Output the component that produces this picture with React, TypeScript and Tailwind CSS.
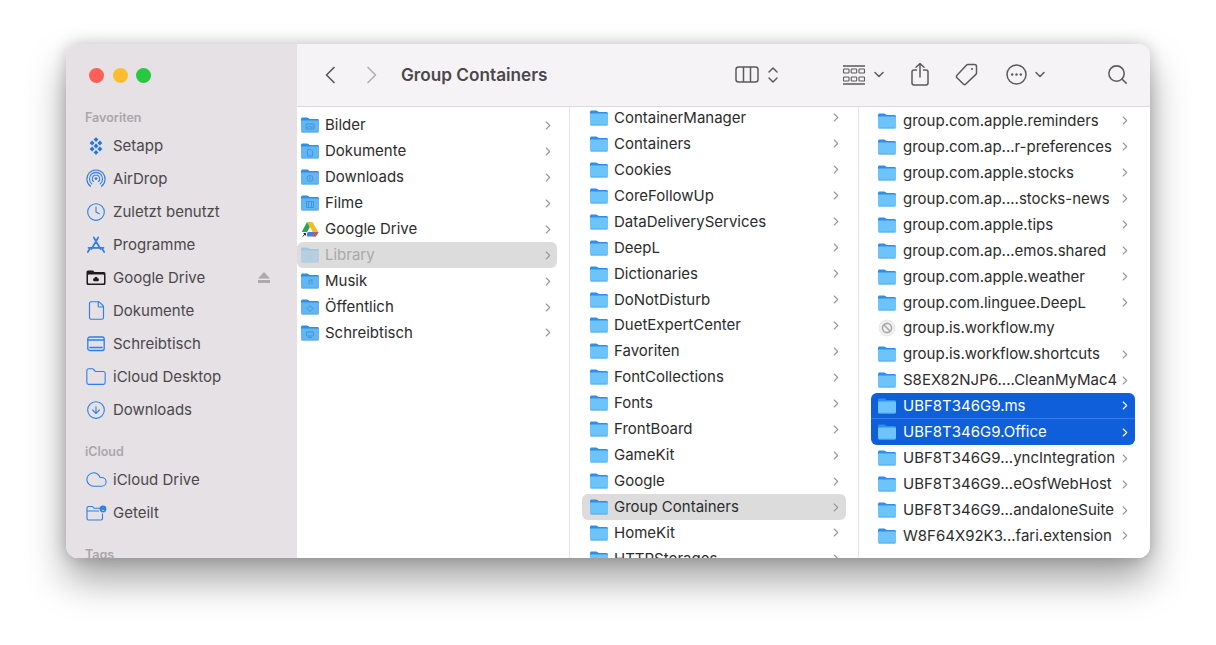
import type { ReactNode } from "react"
import { Clock, File, CircleArrowDown, Folder, Cloud, Search } from "lucide-react"

const font = "font-['Inter','Liberation_Sans',sans-serif]"

function Chevron({ white }: { white?: boolean }) {
  return (
    <svg width="6" height="9" viewBox="0 0 6 9" fill="none" className="shrink-0">
      <path d="M1.200 1l3.500 3.500-3.500 3.500" stroke={white ? "#ffffff" : "#999999"} strokeWidth="1.100" strokeLinecap="round" strokeLinejoin="round" />
    </svg>
  )
}

function FolderIcon({ glyph, faded, tone }: { glyph?: ReactNode; faded?: boolean; tone?: string }) {
  return (
    <svg width="18" height="16" viewBox="0 0 18 16" className={faded ? "shrink-0 opacity-30" : "shrink-0"}>
      <path d="M1.500 0.500h4.600c.6 0 1 .2 1.400.6l1 1h8c.8 0 1.500.7 1.500 1.500v2h-18v-3.600c0-.8.7-1.500 1.500-1.500z" fill="#2f8fe6" />
      <path d="M0 4.500c0-.6.5-1 1-1h16c.6 0 1 .4 1 1v9.500c0 .9-.7 1.500-1.500 1.500h-15c-.8 0-1.500-.6-1.500-1.500z" fill={tone ?? "#6cc4fb"} />
      <path d="M0.500 15h17" stroke="#4ea6e8" strokeWidth="0.800" />
      {glyph}
    </svg>
  )
}

const glyphStroke = { stroke: "#3d94d8", strokeWidth: 0.9, fill: "none" }

const glyphs: Record<string, ReactNode> = {
  image: <path d="M5 7h8v5H5zM6 11l2-2 2 1.500 2-1" {...glyphStroke} />,
  doc: <path d="M6.500 6.500h3.500l1.500 1.500v5h-5z" {...glyphStroke} />,
  down: <g {...glyphStroke}><circle cx="9" cy="9.500" r="3" /><path d="M9 8v3" /></g>,
  film: <path d="M5.500 6.500h7v6h-7zM7.500 6.500v6M10.500 6.500v6" {...glyphStroke} />,
  lib: <path d="M6 8h3M6 10h6M6 12h6" {...glyphStroke} strokeDasharray="1 1" />,
  music: <path d="M8 12V7.500l3-.8V11" {...glyphStroke} />,
  pub: <path d="M9 6.500l3 3-3 3-3-3z" {...glyphStroke} />,
  desk: <path d="M5.500 7h7v4h-7zM7 12.500h4" {...glyphStroke} />,
}

function DriveIcon() {
  return (
    <svg width="18" height="17" viewBox="0 0 18 17" className="shrink-0">
      <path d="M6 1h5.500l6 10.500h-5.500z" fill="#f4bd1d" />
      <path d="M6 1l2.800 5L4 15l-3-4.500z" fill="#27a552" />
      <path d="M4 15.500l2.800-4.500h10.700l-2.800 4.500z" fill="#3f7fe8" />
      <path d="M12 11.500h5.500l-2.800 4h-3z" fill="#e8503a" opacity="0.9" />
      <rect x="0.500" y="11" width="5.500" height="5.500" rx="1" fill="#fff" />
      <path d="M1.800 15.500l2.400-2.700M2.500 12.500h2v2" stroke="#222" strokeWidth="1" fill="none" />
    </svg>
  )
}

function BlockedIcon() {
  return (
    <svg width="18" height="18" viewBox="0 0 18 18" className="shrink-0">
      <circle cx="9" cy="9" r="8" fill="#f1f1f1" stroke="#dedede" strokeWidth="0.600" />
      <circle cx="9" cy="9" r="4.600" fill="none" stroke="#a8a8a8" strokeWidth="1.600" />
      <path d="M5.800 5.800l6.400 6.400" stroke="#a8a8a8" strokeWidth="1.600" />
    </svg>
  )
}

function Row({
  label,
  icon,
  selected,
  active,
  faded,
  chevron = true,
  rowClass,
}: {
  label: string
  icon: ReactNode
  selected?: boolean
  active?: boolean
  faded?: boolean
  chevron?: boolean
  rowClass: string
}) {
  return (
    <div className={`flex h-[25.94px] items-center ${rowClass} ${active ? "bg-[#dcdcdc] rounded-md" : ""} ${selected ? "text-white" : faded ? "text-[#a9a9a9]" : "text-[#2c2c2c]"}`}>
      {icon}
      <span className="min-w-0 flex-1 whitespace-nowrap text-[15px] leading-[18px]">{label}</span>
      {chevron && <Chevron white={selected} />}
    </div>
  )
}

const col1: { label: string; glyph?: string; kind?: string }[] = [
  { label: "Bilder", glyph: "image" },
  { label: "Dokumente", glyph: "doc" },
  { label: "Downloads", glyph: "down" },
  { label: "Filme", glyph: "film" },
  { label: "Google Drive", kind: "drive" },
  { label: "Library", glyph: "lib", kind: "active" },
  { label: "Musik", glyph: "music" },
  { label: "Öffentlich", glyph: "pub" },
  { label: "Schreibtisch", glyph: "desk" },
]

const col2 = [
  "ContainerManager",
  "Containers",
  "Cookies",
  "CoreFollowUp",
  "DataDeliveryServices",
  "DeepL",
  "Dictionaries",
  "DoNotDisturb",
  "DuetExpertCenter",
  "Favoriten",
  "FontCollections",
  "Fonts",
  "FrontBoard",
  "GameKit",
  "Google",
  "Group Containers",
  "HomeKit",
  "HTTPStorages",
]

const col3 = [
  "group.com.apple.reminders",
  "group.com.ap...r-preferences",
  "group.com.apple.stocks",
  "group.com.ap....stocks-news",
  "group.com.apple.tips",
  "group.com.ap...emos.shared",
  "group.com.apple.weather",
  "group.com.linguee.DeepL",
  "group.is.workflow.my",
  "group.is.workflow.shortcuts",
  "S8EX82NJP6....CleanMyMac4",
  "UBF8T346G9.ms",
  "UBF8T346G9.Office",
  "UBF8T346G9...yncIntegration",
  "UBF8T346G9...eOsfWebHost",
  "UBF8T346G9...andaloneSuite",
  "W8F64X92K3...fari.extension",
]

const sideStroke = { fill: "none", stroke: "#2f7fe6", strokeWidth: 1.3, strokeLinecap: "round" as const, strokeLinejoin: "round" as const }

function SetappIcon() {
  const pts = [[9, 2.600], [5.100, 6], [12.900, 6], [9, 9], [5.100, 12], [12.900, 12], [9, 15.400]]
  return (
    <svg width="18" height="18" viewBox="0 0 18 18">
      {pts.map(([x, y]) => (
        <path key={`${x}-${y}`} d={`M${x} ${y - 2.400}l2.400 2.400-2.400 2.400-2.400-2.400z`} fill="#1f74e8" />
      ))}
    </svg>
  )
}

function AirDropIcon() {
  return (
    <svg width="20" height="20" viewBox="0 0 20 20" {...sideStroke} strokeWidth={1.100}>
      <path d="M4.500 17.300a9.100 9.100 0 1 1 11 0" />
      <path d="M5.800 14.800a6.500 6.500 0 1 1 8.400 0" />
      <path d="M7.500 12.500a3.700 3.700 0 1 1 5 0" />
      <circle cx="10" cy="9.600" r="1.400" fill="#2f7fe6" stroke="none" />
    </svg>
  )
}

function AppsIcon() {
  return (
    <svg width="20" height="18" viewBox="0 0 20 18" {...sideStroke} strokeWidth={1.700}>
      <path d="M7.800 1.500L14.500 13M12.200 1.500L5.500 13M2.500 11.800h15M1.800 16l1.800-2.800M18.200 16l-1.800-2.800" />
    </svg>
  )
}

function DriveFolderIcon() {
  return (
    <svg width="20" height="16" viewBox="0 0 20 16">
      <path d="M2 0.500h5l1.500 1.500H18a1.500 1.500 0 0 1 1.500 1.500v10A1.500 1.500 0 0 1 18 15H2a1.500 1.500 0 0 1-1.500-1.500V2A1.500 1.500 0 0 1 2 0.500z" fill="#1c1c1c" />
      <rect x="2" y="4.500" width="16" height="9" rx="0.800" fill="#e5e1e5" />
      <path d="M10 6.800a1.600 1.600 0 0 1 1.600 1.500 1.500 1.500 0 0 1 .4 2.900H8a1.500 1.500 0 0 1 .4-2.900A1.600 1.600 0 0 1 10 6.800z" fill="#1c1c1c" />
    </svg>
  )
}

function DesktopIcon() {
  return (
    <svg width="18" height="16" viewBox="0 0 18 16" {...sideStroke}>
      <rect x="0.800" y="1" width="16.400" height="13.500" rx="2" />
      <path d="M1 4h16" />
      <path d="M3 11.500h12" strokeWidth={1.600} />
    </svg>
  )
}

function SharedIcon() {
  return (
    <svg width="21" height="16" viewBox="0 0 21 16" {...sideStroke} strokeWidth={1.100}>
      <path d="M13.500 3.200H8L6.500 1.500H2.500A1.500 1.500 0 0 0 1 3v10.500A1.500 1.500 0 0 0 2.500 15H15a1.500 1.500 0 0 0 1.500-1.500V9M1 6h11.500" />
      <circle cx="17" cy="4" r="3.400" fill="#2f7fe6" stroke="none" />
      <circle cx="17" cy="3" r="1" fill="#e5e1e5" />
      <path d="M15.500 6c.3-1 2.700-1 3 0z" fill="#e5e1e5" stroke="none" />
    </svg>
  )
}

function SideRow({ icon, label, extra }: { icon: ReactNode; label: string; extra?: ReactNode }) {
  return (
    <div className="flex h-[33px] items-center pr-[27px]">
      <span className="flex w-[47px] shrink-0 items-center justify-center pl-[15px] pr-[2px]">{icon}</span>
      <span className="flex-1 whitespace-nowrap text-[15px] leading-[18px] text-[#4a484a]">{label}</span>
      {extra}
    </div>
  )
}

function SideLabel({ children, className }: { children: ReactNode; className?: string }) {
  return <div className={`pl-[19px] text-[12.500px] font-semibold leading-[14px] text-[#aaa7aa] ${className ?? ""}`}>{children}</div>
}

function Toolbar() {
  const c = "#5c5a5c"
  return (
    <div className="flex h-[63px] shrink-0 items-center border-b border-[#dcdadc] bg-[#f6f3f6] pb-[1px]">
      <svg width="12" height="18" viewBox="0 0 12 18" fill="none" className="ml-[27px]">
        <path d="M10 1.500L2.500 9l7.500 7.500" stroke={c} strokeWidth="1.700" strokeLinecap="round" strokeLinejoin="round" />
      </svg>
      <svg width="12" height="18" viewBox="0 0 12 18" fill="none" className="ml-[30px]">
        <path d="M2 1.500L9.500 9 2 16.500" stroke="#b3b1b3" strokeWidth="1.700" strokeLinecap="round" strokeLinejoin="round" />
      </svg>
      <span className="ml-[23px] whitespace-nowrap text-[17.200px] font-semibold leading-[20px] text-[#4a484a]">Group Containers</span>
      <svg width="24" height="17" viewBox="0 0 24 17" fill="none" stroke={c} strokeWidth="1.500" className="ml-[188px]">
        <rect x="1" y="1" width="22" height="15" rx="2.500" />
        <path d="M8.500 1v15M15.500 1v15" />
      </svg>
      <svg width="12" height="18" viewBox="0 0 12 18" fill="none" stroke={c} strokeWidth="1.500" strokeLinecap="round" strokeLinejoin="round" className="ml-[8px]">
        <path d="M2 6l4-4 4 4M2 12l4 4 4-4" />
      </svg>
      <svg width="22" height="20" viewBox="0 0 22 20" fill="none" stroke={c} strokeWidth="1.100" className="ml-[64px]">
        <path d="M0 1h22M0 19h22" strokeWidth="1.400" />
        <rect x="0.500" y="4" width="5.500" height="4" rx="0.800" />
        <rect x="8.200" y="4" width="5.500" height="4" rx="0.800" />
        <rect x="16" y="4" width="5.500" height="4" rx="0.800" />
        <rect x="0.500" y="12" width="5.500" height="4" rx="0.800" />
        <rect x="8.200" y="12" width="5.500" height="4" rx="0.800" />
        <rect x="16" y="12" width="5.500" height="4" rx="0.800" />
      </svg>
      <svg width="10" height="7" viewBox="0 0 10 7" fill="none" stroke={c} strokeWidth="1.500" strokeLinecap="round" strokeLinejoin="round" className="ml-[9px]">
        <path d="M1 1.500l4 4 4-4" />
      </svg>
      <svg width="18" height="24" viewBox="0 0 18 24" fill="none" stroke={c} strokeWidth="1.500" strokeLinecap="round" strokeLinejoin="round" className="ml-[27px] -translate-y-[1px]">
        <path d="M5.500 8H3a2 2 0 0 0-2 2v11a2 2 0 0 0 2 2h12a2 2 0 0 0 2-2V10a2 2 0 0 0-2-2h-2.500" />
        <path d="M9 15V1.500M5 5.200l4-3.700 4 3.700" />
      </svg>
      <svg width="23" height="23" viewBox="0 0 23 23" fill="none" stroke={c} strokeWidth="1.500" strokeLinejoin="round" className="ml-[26px]">
        <path d="M13 1.500h6.500a2 2 0 0 1 2 2V10a2 2 0 0 1-.6 1.400L10.800 21a1.800 1.800 0 0 1-2.500 0L2 14.700a1.800 1.800 0 0 1 0-2.500L11.600 2.100A2 2 0 0 1 13 1.500z" />
        <circle cx="17" cy="6" r="1.100" fill={c} stroke="none" />
      </svg>
      <svg width="21" height="21" viewBox="0 0 21 21" fill="none" stroke={c} strokeWidth="1.500" className="ml-[28px]">
        <circle cx="10.500" cy="10.500" r="9.500" />
        <circle cx="6.200" cy="10.500" r="1.200" fill={c} stroke="none" />
        <circle cx="10.500" cy="10.500" r="1.200" fill={c} stroke="none" />
        <circle cx="14.800" cy="10.500" r="1.200" fill={c} stroke="none" />
      </svg>
      <svg width="10" height="7" viewBox="0 0 10 7" fill="none" stroke={c} strokeWidth="1.500" strokeLinecap="round" strokeLinejoin="round" className="ml-[8px]">
        <path d="M1 1.500l4 4 4-4" />
      </svg>
      <Search size={23} strokeWidth={1.600} color={c} className="ml-[61px]" />
    </div>
  )
}

export default function App() {
  return (
    <div className={`h-[645px] w-[1216px] overflow-hidden bg-white pl-[66px] pt-[44px] ${font}`}>
      <div className="flex h-[514px] w-[1084px] overflow-hidden rounded-[12px] shadow-[0_22px_38px_rgba(0,0,0,0.36),0_0_16px_rgba(0,0,0,0.2)]">
        <aside className="w-[231px] shrink-0 overflow-hidden bg-[#e5e1e5]">
          <div className="flex h-[62px] items-center gap-[8.500px] pl-[23px]">
            <span className="h-[15px] w-[15px] rounded-full bg-[#ff5f57]" />
            <span className="h-[15px] w-[15px] rounded-full bg-[#febc2e]" />
            <span className="h-[15px] w-[15px] rounded-full bg-[#28c840]" />
          </div>
          <SideLabel className="mt-[5px]">Favoriten</SideLabel>
          <div className="mt-[4px]">
            <SideRow icon={<SetappIcon />} label="Setapp" />
            <SideRow icon={<AirDropIcon />} label="AirDrop" />
            <SideRow icon={<Clock size={20} strokeWidth={1.300} color="#2f7fe6" />} label="Zuletzt benutzt" />
            <SideRow icon={<AppsIcon />} label="Programme" />
            <SideRow
              icon={<DriveFolderIcon />}
              label="Google Drive"
              extra={
                <svg width="12" height="11" viewBox="0 0 12 11" fill="#acaaac">
                  <path d="M6 0l6 6.500H0zM0 8h12v3H0z" />
                </svg>
              }
            />
            <SideRow icon={<File size={21} strokeWidth={1.300} color="#2f7fe6" />} label="Dokumente" />
            <SideRow icon={<DesktopIcon />} label="Schreibtisch" />
            <SideRow icon={<Folder size={22} strokeWidth={1.200} color="#2f7fe6" />} label="iCloud Desktop" />
            <SideRow icon={<CircleArrowDown size={20} strokeWidth={1.300} color="#2f7fe6" />} label="Downloads" />
          </div>
          <SideLabel className="mt-[19px]">iCloud</SideLabel>
          <div className="mt-[4px]">
            <SideRow icon={<Cloud size={23} strokeWidth={1.100} color="#2f7fe6" />} label="iCloud Drive" />
            <SideRow icon={<SharedIcon />} label="Geteilt" />
          </div>
          <SideLabel className="mt-[19px]">Tags</SideLabel>
        </aside>

        <main className="flex min-w-0 flex-1 flex-col bg-white">
          <Toolbar />
          <div className="flex min-h-0 flex-1 overflow-hidden">
            <section className="w-[273px] shrink-0 overflow-hidden border-r border-[#e6e6e6] pr-[12px] pt-[5.500px]">
              {col1.map((r) => (
                <Row
                  key={r.label}
                  label={r.label}
                  active={r.kind === "active"}
                  faded={r.kind === "active"}
                  rowClass="gap-[6px] pl-[4px] pr-[6px]"
                  icon={r.kind === "drive" ? <DriveIcon /> : <FolderIcon tone="#62b6f2" glyph={r.glyph ? glyphs[r.glyph] : undefined} faded={r.kind === "active"} />}
                />
              ))}
            </section>
            <section className="w-[289px] shrink-0 overflow-hidden border-r border-[#e6e6e6] px-[12px]">
              <div className="-mt-[2px]">
                {col2.map((label) => (
                  <Row
                    key={label}
                    label={label}
                    active={label === "Group Containers"}
                    rowClass="gap-[6px] pl-[8px] pr-[7px]"
                    icon={<FolderIcon />}
                  />
                ))}
              </div>
            </section>
            <section className="min-w-0 flex-1 overflow-hidden pl-[12px] pr-[15px] pt-[1px]">
              {col3.map((label, i) => {
                const selected = i === 11 || i === 12
                const blocked = label === "group.is.workflow.my"
                return (
                  <Row
                    key={label}
                    label={label}
                    selected={selected}
                    chevron={!blocked}
                    rowClass={`gap-[7px] pl-[7px] pr-[7px] ${selected ? "bg-[#0f5fdb]" : ""} ${i === 11 ? "rounded-t-md border-b border-[#3b7de3]" : ""} ${i === 12 ? "rounded-b-md" : ""}`}
                    icon={blocked ? <BlockedIcon /> : <FolderIcon />}
                  />
                )
              })}
            </section>
          </div>
        </main>
      </div>
    </div>
  )
}
